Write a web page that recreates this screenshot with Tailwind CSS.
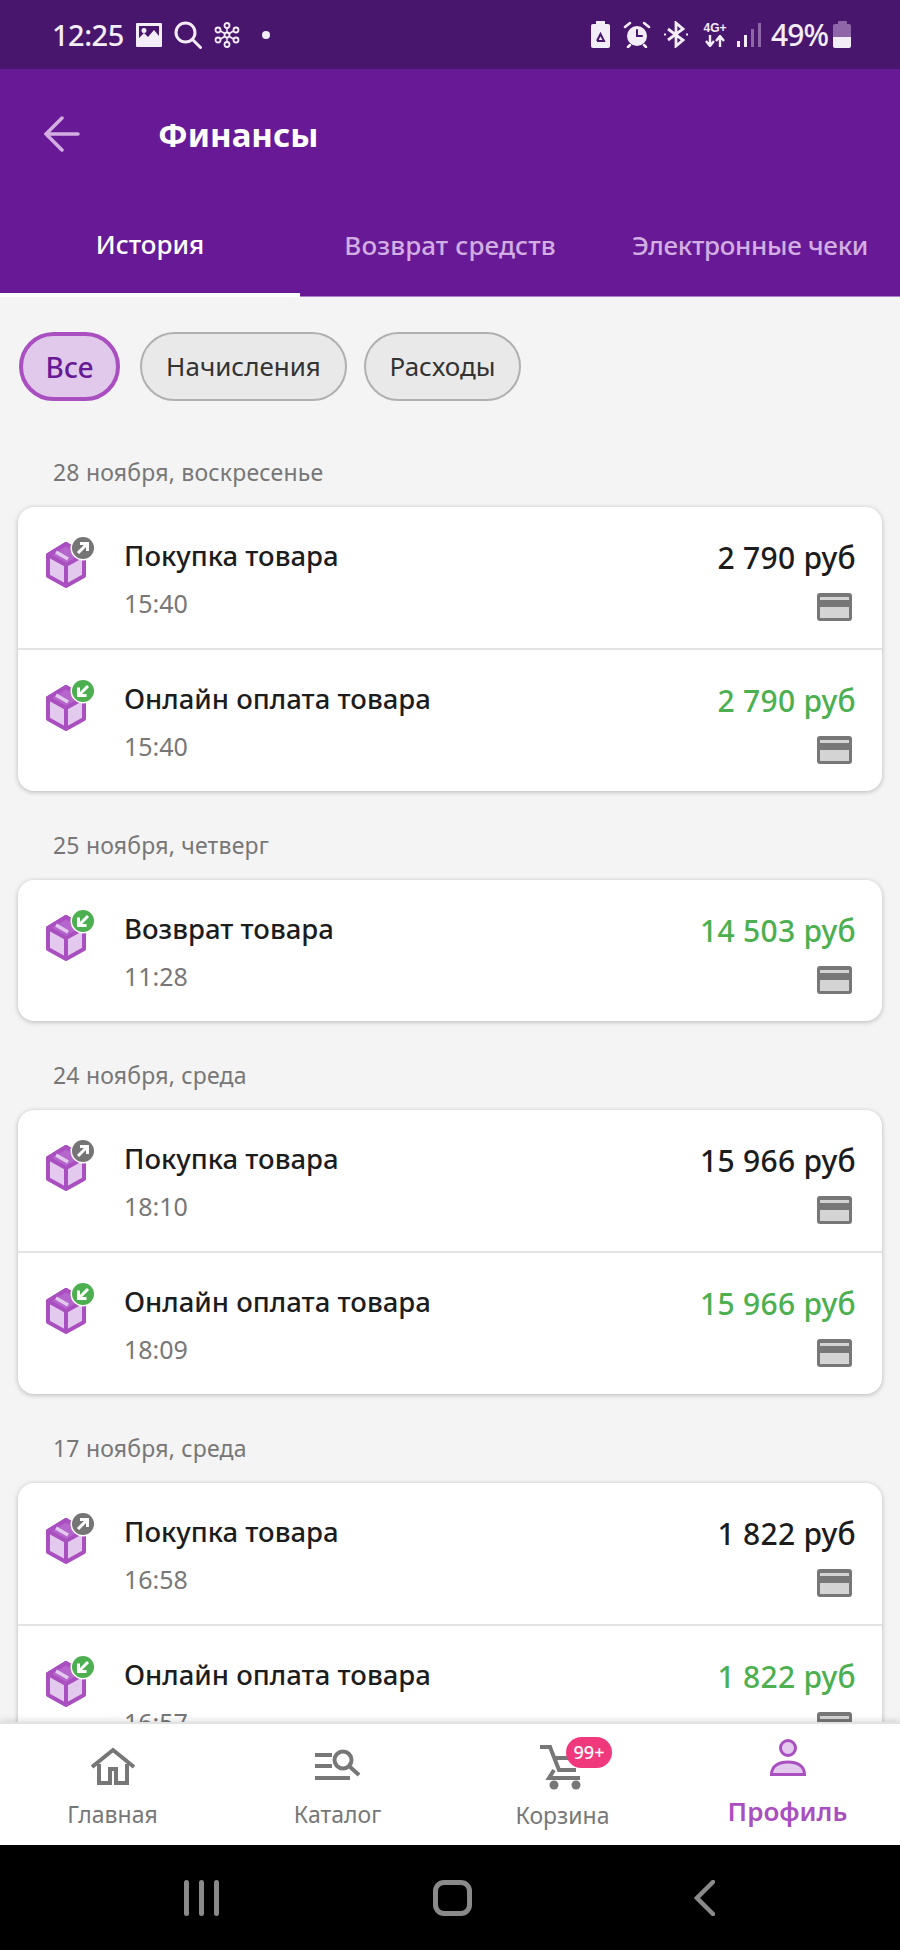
<!DOCTYPE html>
<html lang="ru">
<head>
  <meta charset="UTF-8" />
  <title>Финансы</title>
  <script src="https://cdn.jsdelivr.net/npm/@tailwindcss/browser@4"></script>
</head>
<body class="h-[1950px] w-[900px] overflow-hidden bg-[#f4f4f4] font-['Noto_Sans',sans-serif] text-[#1c1c1c]">

<svg class="hidden">
  <symbol id="box" viewBox="0 0 60 60">
    <path d="M12 23 30 12 48 23 48 44 30 54 12 44Z" fill="#e3c9ed" stroke="#a94fc0" stroke-width="4" stroke-linejoin="round"/>
    <path d="M12 23 30 12 48 23 30 33Z" fill="#b566cc" stroke="#a94fc0" stroke-width="4" stroke-linejoin="round"/>
    <path d="M30 33V54" stroke="#a94fc0" stroke-width="4"/>
    <path d="M20 20 32 27" stroke="#e3c9ed" stroke-width="3.500"/>
  </symbol>
  <symbol id="card" viewBox="0 0 35 28">
    <rect width="35" height="28" rx="3" fill="#777"/>
    <rect x="3" y="4" width="29" height="3" fill="#d4d4d4"/>
    <rect x="3" y="14" width="29" height="11" fill="#d4d4d4"/>
  </symbol>
</svg>

<div class="flex h-full flex-col">

  <!-- status bar -->
  <div class="flex h-[69px] shrink-0 items-center bg-[#49166e] pl-[52px] pr-[49px] text-[#f3edf7]">
    <span class="w-[84px] text-[29px] leading-none font-medium tracking-[-0.5px]">12:25</span>
    <svg class="h-[24px] w-[26px]" viewBox="0 0 26 24"><path fill-rule="evenodd" fill="#f3edf7" d="M1 0H25a1 1 0 0 1 1 1V23a1 1 0 0 1-1 1H1a1 1 0 0 1-1-1V1a1 1 0 0 1 1-1ZM3 3V15L8 10 12 14 18 7 23 13V3ZM8 5a2.500 2.500 0 1 1 0 5 2.500 2.500 0 0 1 0-5Z"/></svg>
    <svg class="ml-[12px] h-[28px] w-[28px]" viewBox="0 0 28 28" fill="none" stroke="#f3edf7" stroke-width="3" stroke-linecap="round"><circle cx="11.500" cy="11.500" r="9.500"/><path d="M18.500 18.500 26.500 26.500"/></svg>
    <svg class="ml-[12px] h-[26px] w-[26px]" viewBox="0 0 26 26" fill="none" stroke="#f3edf7" stroke-width="1.800"><path d="M13 4V22M5 8 21 18M21 8 5 18" stroke-width="1.500"/><circle cx="13" cy="13" r="2.500" fill="#49166e"/><circle cx="13" cy="3.500" r="2.500" fill="#49166e"/><circle cx="13" cy="22.500" r="2.500" fill="#49166e"/><circle cx="4" cy="8" r="2.500" fill="#49166e"/><circle cx="22" cy="8" r="2.500" fill="#49166e"/><circle cx="4" cy="18" r="2.500" fill="#49166e"/><circle cx="22" cy="18" r="2.500" fill="#49166e"/></svg>
    <span class="ml-[22px] h-[8px] w-[8px] rounded-full bg-[#f3edf7]"></span>

    <svg class="ml-auto h-[27px] w-[19px]" viewBox="0 0 19 27"><path fill="#f3edf7" d="M5 0H14V3H17a2 2 0 0 1 2 2V25a2 2 0 0 1-2 2H2a2 2 0 0 1-2-2V5a2 2 0 0 1 2-2H5Z"/><path fill="none" stroke="#49166e" stroke-width="2" d="M6 20 9.500 13 13 20H6"/></svg>
    <svg class="ml-[13px] h-[27px] w-[28px]" viewBox="0 0 28 27" fill="none" stroke="#f3edf7" stroke-linecap="round"><circle cx="14" cy="15" r="9" fill="#f3edf7" stroke-width="2"/><path stroke="#49166e" stroke-width="2" d="M14 9V15H19"/><path stroke-width="2.500" d="M2 6 7 2M26 6 21 2M7 24 5 26M21 24 23 26"/></svg>
    <svg class="ml-[13px] h-[27px] w-[24px]" viewBox="0 0 24 27" fill="none" stroke="#f3edf7" stroke-width="2.800"><path d="M4 8 19 19 12 25V2L19 8 4 19"/><path d="M0 13.500H2M22 13.500H24" stroke-width="2"/></svg>
    <div class="ml-[14px] flex w-[26px] flex-col items-center">
      <span class="font-['Liberation_Sans',sans-serif] text-[12px] leading-[13px] font-bold whitespace-nowrap">4G+</span>
      <svg class="h-[12px] w-[20px]" viewBox="0 0 20 12" fill="none" stroke="#f3edf7" stroke-width="2.400"><path d="M5 0V10M1 6 5 11 9 6M15 12V2M11 6 15 1 19 6"/></svg>
    </div>
    <div class="ml-[9px] flex h-[24px] items-end gap-[4px]">
      <span class="h-[6px] w-[3px] bg-[#f3edf7]"></span>
      <span class="h-[12px] w-[3px] bg-[#f3edf7]"></span>
      <span class="h-[18px] w-[3px] bg-[#8f66a8]"></span>
      <span class="h-[24px] w-[3px] bg-[#8f66a8]"></span>
    </div>
    <span class="ml-[10px] text-[30px] leading-none font-medium tracking-[-1px]">49%</span>
    <div class="ml-[5px] flex h-[27px] w-[18px] flex-col items-center">
      <span class="h-[3px] w-[9px] rounded-t-[1px] bg-[#8f66a8]"></span>
      <span class="h-[13px] w-full rounded-t-[2px] bg-[#8f66a8]"></span>
      <span class="h-[11px] w-full rounded-b-[2px] bg-[#f3edf7]"></span>
    </div>
  </div>

  <!-- header -->
  <div class="flex h-[228px] shrink-0 flex-col bg-[#681a96]">
    <div class="flex h-[130px] items-center pl-[44px]">
      <svg class="h-[36px] w-[36px]" viewBox="0 0 36 36" fill="none" stroke="#d2aee2" stroke-width="3.500" stroke-linecap="round"><path d="M2 18H34M18 2 2 18 18 34"/></svg>
      <span class="ml-[78px] text-[33px] leading-none font-bold text-white">Финансы</span>
    </div>
    <div class="mt-auto grid grid-cols-3 border-b border-[#a980c4]">
      <div class="-mb-px flex h-[97px] items-center justify-center border-b-[4px] border-white pb-[5px] text-[26px] font-medium text-white">История</div>
      <div class="flex h-[96px] items-center justify-center pb-[6px] text-[26px] font-medium tracking-[0.1px] whitespace-nowrap text-[#d2aee2]">Возврат средств</div>
      <div class="flex h-[96px] items-center justify-center pb-[6px] text-[26px] font-medium tracking-[-0.3px] whitespace-nowrap text-[#d2aee2]">Электронные чеки</div>
    </div>
  </div>

  <!-- list -->
  <div class="min-h-0 flex-1 overflow-hidden px-[18px]">
    <div class="ml-px mt-[35px] flex gap-[20px]">
      <div class="flex h-[69px] w-[101px] items-center justify-center rounded-full border-[4px] border-[#a94fc0] bg-[#e0c9eb] text-[28px] font-medium text-[#681a96]">Все</div>
      <div class="flex h-[69px] w-[207px] items-center justify-center rounded-full border-[2px] border-[#b0b0b0] bg-[#e9e9e9] text-[26px] text-[#333]">Начисления</div>
      <div class="-ml-[3px] flex h-[69px] w-[157px] items-center justify-center rounded-full border-[2px] border-[#b0b0b0] bg-[#e9e9e9] text-[26px] text-[#333]">Расходы</div>
    </div>

    <div class="mt-[56px] mb-[20px] pl-[35px] text-[23px] leading-[30px] tracking-[0.2px] text-[#777]">28 ноября, воскресенье</div>
    <div class="overflow-hidden rounded-[16px] bg-white shadow-[0_1px_5px_rgba(0,0,0,0.25)]">
      <div class="flex h-[141px] items-start pl-[18px] pr-[26px] pt-[25px]">
        <div class="relative h-[60px] w-[60px]"><svg class="h-[60px] w-[60px]"><use href="#box"/></svg><svg class="absolute top-0 left-0 h-[60px] w-[60px]" viewBox="0 0 60 60"><circle cx="47" cy="16" r="12.500" fill="#fff"/><circle cx="47" cy="16" r="11" fill="#757575"/><path d="M42 21 51 12M44 11.500H51.500V19" fill="none" stroke="#fff" stroke-width="3"/></svg></div>
        <div class="ml-[28px] pt-[7px]">
          <div class="text-[27.500px] leading-[34px] font-medium">Покупка товара</div>
          <div class="mt-[15px] text-[25px] leading-[30px] text-[#777]">15:40</div>
        </div>
        <div class="ml-auto flex flex-col items-end pt-[8px]">
          <div class="text-[30px] leading-[36px] font-medium tracking-[0.3px] whitespace-nowrap">2 790 руб</div>
          <svg class="mt-[17px] mr-[4px] h-[28px] w-[35px]"><use href="#card"/></svg>
        </div>
      </div>
      <div class="h-[2px] bg-[#e4e4e4]"></div>
      <div class="flex h-[141px] items-start pl-[18px] pr-[26px] pt-[25px]">
        <div class="relative h-[60px] w-[60px]"><svg class="h-[60px] w-[60px]"><use href="#box"/></svg><svg class="absolute top-0 left-0 h-[60px] w-[60px]" viewBox="0 0 60 60"><circle cx="47" cy="16" r="12.500" fill="#fff"/><circle cx="47" cy="16" r="11" fill="#4caf50"/><path d="M52 11 43 20M42.500 12.500V20.500H50.500" fill="none" stroke="#fff" stroke-width="3"/></svg></div>
        <div class="ml-[28px] pt-[7px]">
          <div class="text-[27.500px] leading-[34px] font-medium">Онлайн оплата товара</div>
          <div class="mt-[15px] text-[25px] leading-[30px] text-[#777]">15:40</div>
        </div>
        <div class="ml-auto flex flex-col items-end pt-[8px]">
          <div class="text-[30px] leading-[36px] font-medium tracking-[0.3px] whitespace-nowrap text-[#4caf50]">2 790 руб</div>
          <svg class="mt-[17px] mr-[4px] h-[28px] w-[35px]"><use href="#card"/></svg>
        </div>
      </div>
    </div>

    <div class="mt-[39px] mb-[20px] pl-[35px] text-[23px] leading-[30px] tracking-[0.2px] text-[#777]">25 ноября, четверг</div>
    <div class="overflow-hidden rounded-[16px] bg-white shadow-[0_1px_5px_rgba(0,0,0,0.25)]">
      <div class="flex h-[141px] items-start pl-[18px] pr-[26px] pt-[25px]">
        <div class="relative h-[60px] w-[60px]"><svg class="h-[60px] w-[60px]"><use href="#box"/></svg><svg class="absolute top-0 left-0 h-[60px] w-[60px]" viewBox="0 0 60 60"><circle cx="47" cy="16" r="12.500" fill="#fff"/><circle cx="47" cy="16" r="11" fill="#4caf50"/><path d="M52 11 43 20M42.500 12.500V20.500H50.500" fill="none" stroke="#fff" stroke-width="3"/></svg></div>
        <div class="ml-[28px] pt-[7px]">
          <div class="text-[27.500px] leading-[34px] font-medium">Возврат товара</div>
          <div class="mt-[15px] text-[25px] leading-[30px] text-[#777]">11:28</div>
        </div>
        <div class="ml-auto flex flex-col items-end pt-[8px]">
          <div class="text-[30px] leading-[36px] font-medium tracking-[0.3px] whitespace-nowrap text-[#4caf50]">14 503 руб</div>
          <svg class="mt-[17px] mr-[4px] h-[28px] w-[35px]"><use href="#card"/></svg>
        </div>
      </div>
    </div>

    <div class="mt-[39px] mb-[20px] pl-[35px] text-[23px] leading-[30px] tracking-[0.2px] text-[#777]">24 ноября, среда</div>
    <div class="overflow-hidden rounded-[16px] bg-white shadow-[0_1px_5px_rgba(0,0,0,0.25)]">
      <div class="flex h-[141px] items-start pl-[18px] pr-[26px] pt-[25px]">
        <div class="relative h-[60px] w-[60px]"><svg class="h-[60px] w-[60px]"><use href="#box"/></svg><svg class="absolute top-0 left-0 h-[60px] w-[60px]" viewBox="0 0 60 60"><circle cx="47" cy="16" r="12.500" fill="#fff"/><circle cx="47" cy="16" r="11" fill="#757575"/><path d="M42 21 51 12M44 11.500H51.500V19" fill="none" stroke="#fff" stroke-width="3"/></svg></div>
        <div class="ml-[28px] pt-[7px]">
          <div class="text-[27.500px] leading-[34px] font-medium">Покупка товара</div>
          <div class="mt-[15px] text-[25px] leading-[30px] text-[#777]">18:10</div>
        </div>
        <div class="ml-auto flex flex-col items-end pt-[8px]">
          <div class="text-[30px] leading-[36px] font-medium tracking-[0.3px] whitespace-nowrap">15 966 руб</div>
          <svg class="mt-[17px] mr-[4px] h-[28px] w-[35px]"><use href="#card"/></svg>
        </div>
      </div>
      <div class="h-[2px] bg-[#e4e4e4]"></div>
      <div class="flex h-[141px] items-start pl-[18px] pr-[26px] pt-[25px]">
        <div class="relative h-[60px] w-[60px]"><svg class="h-[60px] w-[60px]"><use href="#box"/></svg><svg class="absolute top-0 left-0 h-[60px] w-[60px]" viewBox="0 0 60 60"><circle cx="47" cy="16" r="12.500" fill="#fff"/><circle cx="47" cy="16" r="11" fill="#4caf50"/><path d="M52 11 43 20M42.500 12.500V20.500H50.500" fill="none" stroke="#fff" stroke-width="3"/></svg></div>
        <div class="ml-[28px] pt-[7px]">
          <div class="text-[27.500px] leading-[34px] font-medium">Онлайн оплата товара</div>
          <div class="mt-[15px] text-[25px] leading-[30px] text-[#777]">18:09</div>
        </div>
        <div class="ml-auto flex flex-col items-end pt-[8px]">
          <div class="text-[30px] leading-[36px] font-medium tracking-[0.3px] whitespace-nowrap text-[#4caf50]">15 966 руб</div>
          <svg class="mt-[17px] mr-[4px] h-[28px] w-[35px]"><use href="#card"/></svg>
        </div>
      </div>
    </div>

    <div class="mt-[39px] mb-[20px] pl-[35px] text-[23px] leading-[30px] tracking-[0.2px] text-[#777]">17 ноября, среда</div>
    <div class="overflow-hidden rounded-[16px] bg-white shadow-[0_1px_5px_rgba(0,0,0,0.25)]">
      <div class="flex h-[141px] items-start pl-[18px] pr-[26px] pt-[25px]">
        <div class="relative h-[60px] w-[60px]"><svg class="h-[60px] w-[60px]"><use href="#box"/></svg><svg class="absolute top-0 left-0 h-[60px] w-[60px]" viewBox="0 0 60 60"><circle cx="47" cy="16" r="12.500" fill="#fff"/><circle cx="47" cy="16" r="11" fill="#757575"/><path d="M42 21 51 12M44 11.500H51.500V19" fill="none" stroke="#fff" stroke-width="3"/></svg></div>
        <div class="ml-[28px] pt-[7px]">
          <div class="text-[27.500px] leading-[34px] font-medium">Покупка товара</div>
          <div class="mt-[15px] text-[25px] leading-[30px] text-[#777]">16:58</div>
        </div>
        <div class="ml-auto flex flex-col items-end pt-[8px]">
          <div class="text-[30px] leading-[36px] font-medium tracking-[0.3px] whitespace-nowrap">1 822 руб</div>
          <svg class="mt-[17px] mr-[4px] h-[28px] w-[35px]"><use href="#card"/></svg>
        </div>
      </div>
      <div class="h-[2px] bg-[#e4e4e4]"></div>
      <div class="flex h-[141px] items-start pl-[18px] pr-[26px] pt-[25px]">
        <div class="relative h-[60px] w-[60px]"><svg class="h-[60px] w-[60px]"><use href="#box"/></svg><svg class="absolute top-0 left-0 h-[60px] w-[60px]" viewBox="0 0 60 60"><circle cx="47" cy="16" r="12.500" fill="#fff"/><circle cx="47" cy="16" r="11" fill="#4caf50"/><path d="M52 11 43 20M42.500 12.500V20.500H50.500" fill="none" stroke="#fff" stroke-width="3"/></svg></div>
        <div class="ml-[28px] pt-[7px]">
          <div class="text-[27.500px] leading-[34px] font-medium">Онлайн оплата товара</div>
          <div class="mt-[15px] text-[25px] leading-[30px] text-[#777]">16:57</div>
        </div>
        <div class="ml-auto flex flex-col items-end pt-[8px]">
          <div class="text-[30px] leading-[36px] font-medium tracking-[0.3px] whitespace-nowrap text-[#4caf50]">1 822 руб</div>
          <svg class="mt-[17px] mr-[4px] h-[28px] w-[35px]"><use href="#card"/></svg>
        </div>
      </div>
    </div>
  </div>

  <!-- bottom nav -->
  <div class="z-10 grid h-[123px] shrink-0 grid-cols-4 border-t-[2px] border-[#e2e2e2] bg-white shadow-[0_-2px_6px_rgba(0,0,0,0.12)]">
    <div class="flex flex-col items-center pt-[23px]">
      <svg class="h-[38px] w-[44px]" viewBox="0 0 44 38" fill="none" stroke="#777" stroke-width="4"><path d="M1 20 22 3 43 20"/><path d="M8 17V36H19V22H25V36H36V17"/></svg>
      <span class="mt-[14px] text-[23px] leading-[30px] text-[#777]">Главная</span>
    </div>
    <div class="flex flex-col items-center pt-[25px]">
      <svg class="h-[32px] w-[46px]" viewBox="0 0 46 32" fill="none" stroke="#777" stroke-width="4"><path d="M0 6H17M0 17H17M0 29H35"/><circle cx="28" cy="11" r="8.500"/><path d="M34 17 44 26"/></svg>
      <span class="mt-[18px] text-[23px] leading-[30px] text-[#777]">Каталог</span>
    </div>
    <div class="relative flex flex-col items-center pt-[20px]">
      <svg class="-ml-[3px] h-[46px] w-[42px]" viewBox="0 0 42 46" fill="none" stroke="#777" stroke-width="4"><path d="M0 3H10L19 26 H36M14 14H34M14 26 9 34H40"/><circle cx="14" cy="41" r="4.500" fill="#777" stroke="none"/><circle cx="36" cy="41" r="4.500" fill="#777" stroke="none"/></svg>
      <span class="mt-[10px] text-[23px] leading-[30px] text-[#777]">Корзина</span>
      <span class="absolute top-[13px] left-[116px] flex h-[31px] w-[46px] items-center justify-center rounded-full bg-[#f0397c] text-[18px] font-medium text-white">99+</span>
    </div>
    <div class="flex flex-col items-center pt-[15px]">
      <svg class="h-[37px] w-[36px]" viewBox="0 0 36 37"><circle cx="18" cy="9" r="7.500" fill="#e3c9ed" stroke="#a94fc0" stroke-width="3"/><path d="M1.500 35.500C1.500 27 9 23 18 23S34.500 27 34.500 35.500Z" fill="#e3c9ed" stroke="#a94fc0" stroke-width="3"/></svg>
      <span class="mt-[17px] text-[26px] leading-[36px] font-semibold text-[#a94fc0]">Профиль</span>
    </div>
  </div>

  <!-- system nav -->
  <div class="flex h-[105px] shrink-0 items-center bg-black pl-[184px]">
    <div class="flex gap-[10px]">
      <span class="h-[36px] w-[5px] rounded-full bg-[#8a8a8a]"></span>
      <span class="h-[36px] w-[5px] rounded-full bg-[#8a8a8a]"></span>
      <span class="h-[36px] w-[5px] rounded-full bg-[#8a8a8a]"></span>
    </div>
    <span class="ml-[214px] h-[36px] w-[39px] rounded-[11px] border-[5px] border-[#8a8a8a]"></span>
    <svg class="ml-[222px] h-[36px] w-[21px]" viewBox="0 0 21 36" fill="none" stroke="#8a8a8a" stroke-width="4.500" stroke-linecap="round"><path d="M19 2 3 18 19 34"/></svg>
  </div>
</div>

</body>
</html>
